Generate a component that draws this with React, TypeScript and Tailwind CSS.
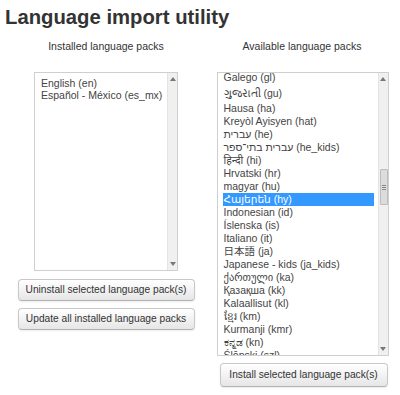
import React from "react";

const font = { fontFamily: '"Liberation Sans", Arial, "DejaVu Sans", "Noto Sans", "Noto Sans CJK JP", sans-serif' };

const available: { t: string; h?: string; sel?: boolean }[] = [
  { t: "Galego (gl)" },
  { t: "ગુજરાતી (gu)", h: "h-[18px]" },
  { t: "Hausa (ha)" },
  { t: "Kreyòl Ayisyen (hat)" },
  { t: "עברית (he)" },
  { t: "עברית בתי־ספר (he_kids)" },
  { t: "हिन्दी (hi)" },
  { t: "Hrvatski (hr)" },
  { t: "magyar (hu)" },
  { t: "Հայերեն (hy)", sel: true },
  { t: "Indonesian (id)" },
  { t: "Íslenska (is)" },
  { t: "Italiano (it)" },
  { t: "日本語 (ja)" },
  { t: "Japanese - kids (ja_kids)" },
  { t: "ქართული (ka)" },
  { t: "Қазақша (kk)" },
  { t: "Kalaallisut (kl)" },
  { t: "ខ្មែរ (km)" },
  { t: "Kurmanji (kmr)" },
  { t: "ಕನ್ನಡ (kn)" },
  { t: "Ślōnski (szl)" },
];

function UpArrow() {
  return (
    <svg width="6" height="4" viewBox="0 0 6 4" className="block">
      <path d="M0 4 L3 0 L6 4 Z" fill="#777" />
    </svg>
  );
}
function DownArrow() {
  return (
    <svg width="6" height="4" viewBox="0 0 6 4" className="block">
      <path d="M0 0 L3 4 L6 0 Z" fill="#777" />
    </svg>
  );
}

function ScrollBar({ thumb }: { thumb?: boolean }) {
  return (
    <div className="w-[10px] h-full bg-[#f0f0f0] border-l border-[#e4e4e4] flex flex-col items-center shrink-0">
      <div className="h-[10px] flex items-center justify-center pt-[2px]">
        <UpArrow />
      </div>
      <div className="flex-1 w-full relative">
        {thumb && (
          <div className="absolute left-[1px] right-0 top-[86px] h-[36px] bg-[#dcdcdc] border border-[#bcbcbc] rounded-[1px] flex flex-col items-center justify-center gap-[1px]">
            <div className="w-[4px] h-px bg-[#888]" />
            <div className="w-[4px] h-px bg-[#888]" />
            <div className="w-[4px] h-px bg-[#888]" />
          </div>
        )}
      </div>
      <div className="h-[10px] flex items-center justify-center pb-[2px]">
        <DownArrow />
      </div>
    </div>
  );
}

function Button({ children, className }: { children: React.ReactNode; className: string }) {
  return (
    <div
      className={
        "flex items-center justify-center whitespace-nowrap rounded-[4px] border border-[#c8c8c8] border-b-[#b3b3b3] bg-gradient-to-b from-white to-[#e6e6e6] text-[10.2px] text-[#333] shadow-[0_1px_2px_rgba(0,0,0,0.08)] " +
        className
      }
    >
      {children}
    </div>
  );
}

export default function App() {
  return (
    <div className="w-[400px] h-[395px] bg-white overflow-hidden" style={font}>
      <h1 className="pl-[5px] pt-[4px] text-[20.3px] leading-[26px] font-bold text-[#333]">
        Language import utility
      </h1>
      <div className="grid grid-cols-[196px_196px] pl-[8px] mt-[9px]">
        <div className="flex flex-col items-center">
          <div className="text-[10.5px] leading-[14px] text-[#333]">Installed language packs</div>
          <div className="mt-[19px] w-[144px] h-[199px] border border-[#cfcfcf] flex bg-white">
            <div className="flex-1 pt-[4px] pl-[6px] text-[10.5px] leading-[12px] text-[#444]">
              <div className="h-[12px] whitespace-nowrap">English (en)</div>
              <div className="h-[12px] whitespace-nowrap">Español - México (es_mx)</div>
            </div>
            <ScrollBar />
          </div>
          <Button className="mt-[8px] w-[177px] h-[22px]">Uninstall selected language pack(s)</Button>
          <Button className="mt-[7px] w-[177px] h-[22px]">Update all installed language packs</Button>
        </div>
        <div className="flex flex-col items-center">
          <div className="text-[10.5px] leading-[14px] text-[#333]">Available language packs</div>
          <div className="mt-[19px] ml-[1px] w-[172px] h-[284px] border border-[#cfcfcf] flex bg-white">
            <div className="flex-1 overflow-hidden pl-[5px] pr-[4px]">
              <div className="-mt-[2px]">
                {available.map((a, i) => (
                  <div
                    key={i}
                    className={
                      (a.h ?? "h-[13px]") +
                      " flex items-center whitespace-nowrap pl-[1px] text-[10.5px] leading-[13px] " +
                      (a.sel ? "bg-[#3399ff] text-white" : "text-[#444]")
                    }
                  >
                    {a.t}
                  </div>
                ))}
              </div>
            </div>
            <ScrollBar thumb />
          </div>
          <Button className="mt-[7px] ml-[3px] w-[168px] h-[24px]">Install selected language pack(s)</Button>
        </div>
      </div>
    </div>
  );
}
